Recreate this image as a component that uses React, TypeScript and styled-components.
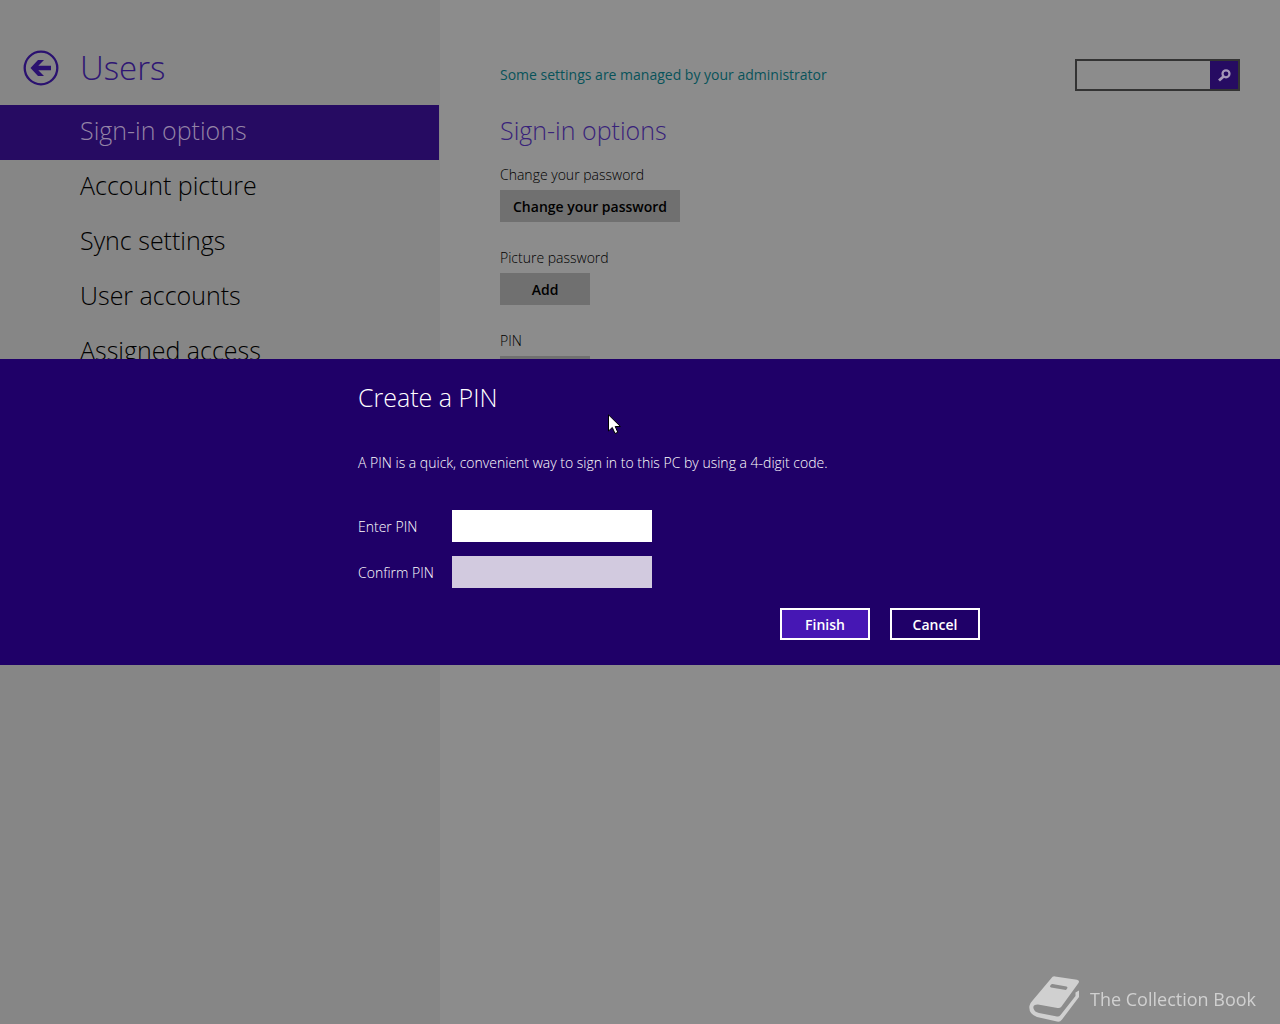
import React from "react";
import styled, { createGlobalStyle } from "styled-components";

const GlobalStyle = createGlobalStyle`
  * { box-sizing: border-box; }
  body {
    margin: 0;
    background: #8c8c8c;
    color: #000000;
    font-family: "Segoe UI", "Open Sans", "Noto Sans", sans-serif;
    font-size: 14px;
    line-height: 20px;
  }
  h1, h2, p { margin: 0; }
  button, input { font: inherit; border-radius: 0; }
`;

const Page = styled.div`
  display: grid;
  grid-template-columns: 440px 1fr;
  min-height: 100vh;
`;

const Sidebar = styled.aside`
  background: #868686;
`;

const SidebarHeader = styled.header`
  display: flex;
  align-items: center;
  gap: 21px;
  height: 105px;
  padding: 30px 0 0 23px;
`;

const BackButton = styled.button`
  display: flex;
  width: 36px;
  height: 36px;
  padding: 0;
  border: 0;
  background: none;
  color: #2a1170;
`;

const Title = styled.h1`
  color: #2f1674;
  font-size: 33px;
  font-weight: 300;
  line-height: 48px;
`;

const NavLink = styled.a<{ $active?: boolean }>`
  display: block;
  height: 55px;
  margin-right: 1px;
  padding-left: 80px;
  background: ${(p) => (p.$active ? "#260b62" : "transparent")};
  color: ${(p) => (p.$active ? "#9484a6" : "#000000")};
  font-size: 25px;
  font-weight: 300;
  line-height: 50px;
  text-decoration: none;
`;

const Main = styled.main`
  padding: 59px 40px 0 60px;
`;

const TopBar = styled.div`
  display: flex;
  align-items: center;
  justify-content: space-between;
`;

const PolicyLink = styled.a`
  color: #08535a;
  text-decoration: none;
`;

const SearchBox = styled.form`
  display: flex;
  width: 165px;
  height: 32px;
  border: 2px solid #333333;
`;

const SearchInput = styled.input`
  flex: 1;
  min-width: 0;
  padding: 0 6px;
  border: 0;
  outline: 0;
  background: transparent;
`;

const SearchButton = styled.button`
  display: flex;
  align-items: center;
  justify-content: center;
  width: 28px;
  padding: 0;
  border: 0;
  background: #260b62;
  color: #a597b8;
`;

const SectionTitle = styled.h2`
  padding: 20px 0 16px;
  color: #38227a;
  font-size: 25px;
  font-weight: 300;
  line-height: 38px;
`;

const Setting = styled.section`
  display: flex;
  flex-direction: column;
  align-items: flex-start;
  gap: 5px;
  margin-bottom: 26px;
`;

const SettingLabel = styled.p`
  font-weight: 300;
`;

const SettingButton = styled.button`
  min-width: 90px;
  height: 32px;
  padding: 2px 13px 0;
  border: 0;
  background: #707070;
  color: #000000;
  font-weight: 600;
`;

const Overlay = styled.div`
  position: fixed;
  inset: 0;
  display: flex;
  align-items: center;
`;

const Dialog = styled.form`
  display: grid;
  grid-template-columns: 358fr 622px 300fr;
  width: 100%;
  padding: 19px 0 25px;
  background: #1f0068;
  color: #ffffff;
`;

const DialogBody = styled.div`
  grid-column: 2;
`;

const DialogTitle = styled.h2`
  margin-bottom: 37px;
  font-size: 25px;
  font-weight: 300;
  line-height: 38px;
`;

const DialogText = styled.p`
  margin-bottom: 37px;
  font-weight: 300;
`;

const Fields = styled.div`
  display: grid;
  grid-template-columns: 94px 200px;
  row-gap: 14px;
  align-items: center;
`;

const FieldLabel = styled.label`
  padding-top: 2px;
  font-weight: 300;
`;

const PinInput = styled.input`
  height: 32px;
  padding: 0 8px;
  border: 0;
  outline: 0;
  background: #ffffff;
  color: #000000;

  &:disabled { background: #d2cadf; }
`;

const Actions = styled.div`
  display: flex;
  justify-content: flex-end;
  gap: 20px;
  margin-top: 20px;
`;

const DialogButton = styled.button<{ $primary?: boolean }>`
  width: 90px;
  height: 32px;
  padding: 2px 0 0;
  border: 2px solid #ffffff;
  background: ${(p) => (p.$primary ? "#4617b4" : "transparent")};
  color: #ffffff;
  font-weight: 600;
`;

const Watermark = styled.div`
  position: fixed;
  right: 24px;
  bottom: 1px;
  display: flex;
  align-items: center;
  gap: 10px;
  color: #d0d0d0;
  font-size: 18px;
  line-height: 24px;
`;

const Pointer = styled.svg`
  position: fixed;
  left: 608px;
  top: 414px;
`;

const navItems = ["Sign-in options", "Account picture", "Sync settings", "User accounts", "Assigned access"];

const settings = [
  { label: "Change your password", action: "Change your password" },
  { label: "Picture password", action: "Add" },
  { label: "PIN", action: "Add" },
];

export default function App() {
  return (
    <>
      <GlobalStyle />
      <Page>
        <Sidebar>
          <SidebarHeader>
            <BackButton type="button" aria-label="Back">
              <svg width="36" height="36" viewBox="0 0 36 36" fill="none">
                <circle cx="18" cy="18" r="16.3" stroke="currentColor" strokeWidth="2.3" />
                <path d="M7.5 18 15 10h6l-5.700 5.800H28v4.400H15.300l5.700 5.800H15z" fill="currentColor" />
              </svg>
            </BackButton>
            <Title>Users</Title>
          </SidebarHeader>
          <nav>
            {navItems.map((item, index) => (
              <NavLink key={item} href="#" $active={index === 0}>{item}</NavLink>
            ))}
          </nav>
        </Sidebar>
        <Main>
          <TopBar>
            <PolicyLink href="#">Some settings are managed by your administrator</PolicyLink>
            <SearchBox role="search">
              <SearchInput type="text" aria-label="Search settings" />
              <SearchButton type="button" aria-label="Search">
                <svg width="14" height="14" viewBox="0 0 14 14" fill="none" stroke="currentColor">
                  <circle cx="9" cy="5.800" r="3.500" strokeWidth="2.200" />
                  <path d="M6.500 8.400 2 12.600" strokeWidth="2.800" />
                </svg>
              </SearchButton>
            </SearchBox>
          </TopBar>
          <SectionTitle>Sign-in options</SectionTitle>
          {settings.map((setting) => (
            <Setting key={setting.label}>
              <SettingLabel>{setting.label}</SettingLabel>
              <SettingButton type="button">{setting.action}</SettingButton>
            </Setting>
          ))}
        </Main>
      </Page>

      <Overlay>
        <Dialog role="dialog" aria-labelledby="pin-title">
          <DialogBody>
            <DialogTitle id="pin-title">Create a PIN</DialogTitle>
            <DialogText>A PIN is a quick, convenient way to sign in to this PC by using a 4-digit code.</DialogText>
            <Fields>
              <FieldLabel htmlFor="pin">Enter PIN</FieldLabel>
              <PinInput id="pin" type="password" />
              <FieldLabel htmlFor="confirm-pin">Confirm PIN</FieldLabel>
              <PinInput id="confirm-pin" type="password" disabled />
            </Fields>
            <Actions>
              <DialogButton type="button" $primary>Finish</DialogButton>
              <DialogButton type="button">Cancel</DialogButton>
            </Actions>
          </DialogBody>
        </Dialog>
      </Overlay>

      <Watermark>
        <svg width="51" height="48" viewBox="0 0 51 48" fill="none">
          <path d="M22.500 3Q23.500 1 26 1.400L48 4.800Q51 5.500 49.500 8L32.500 31.500Q31 33.500 28.500 33L9 29.600Q3.500 29.500 4.500 33.500Q5.500 37 10 38L28 41.500Q30 42 31.500 40L46.500 21V17.500L50 15.500V22L33 44.500Q31 47.300 28 46.600L8 42Q-.5 39 .4 31Q1 28 4 25Z" fill="currentColor" />
          <path d="M23.500 9 37.500 11.500Q39 12 38.300 13.200L37 15 22 12.500Q20.500 12 21.200 10.700Q22 8.800 23.500 9Z" fill="#8c8c8c" />
        </svg>
        <span>The Collection Book</span>
      </Watermark>

      <Pointer width="13" height="20" viewBox="0 0 13 20" aria-hidden="true">
        <path d="M.5 .8V17l3.800-3.500 2.700 6 2.800-1.200-2.600-5.800h5.200z" fill="#ffffff" stroke="#000000" strokeWidth="1" />
      </Pointer>
    </>
  );
}
